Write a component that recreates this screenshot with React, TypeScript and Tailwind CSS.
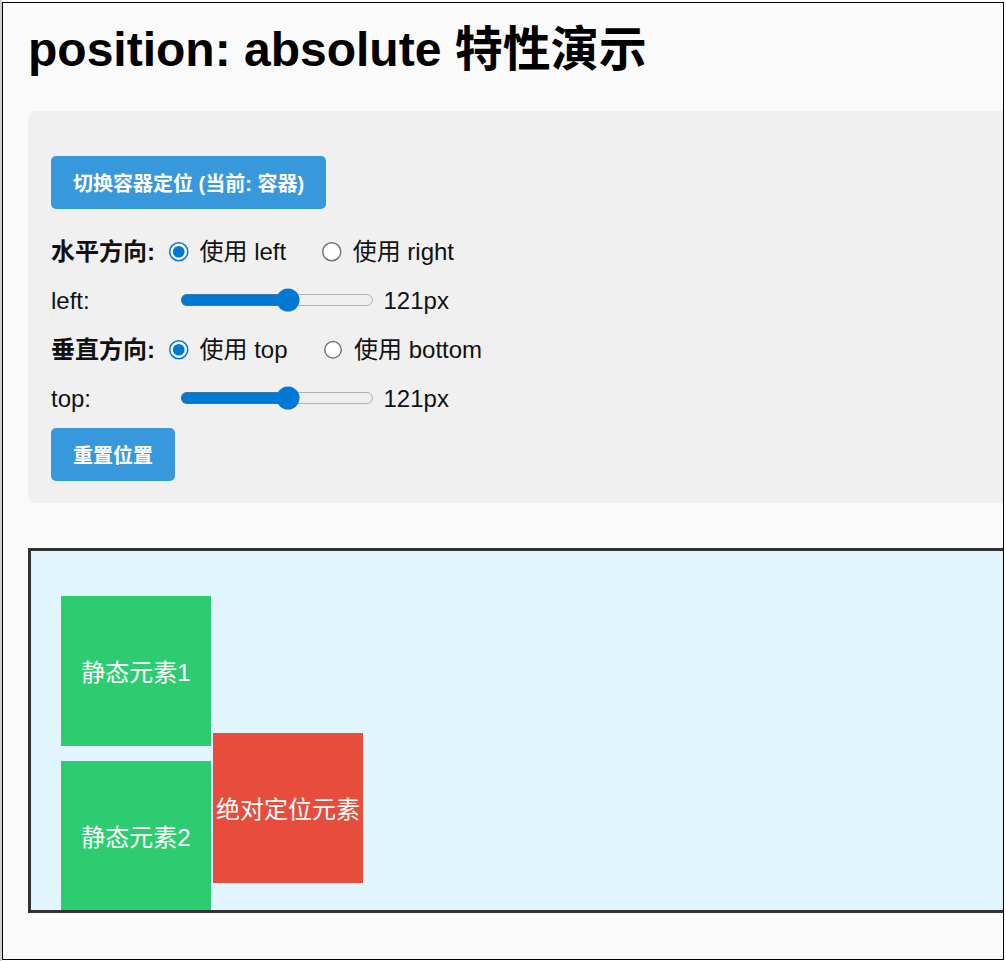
import { useState } from "react";

const FONT = "font-['Liberation_Sans','Noto_Sans_CJK_SC',sans-serif]";

function RadioRow({
  label,
  name,
  options,
  value,
  onChange,
}: {
  label: string;
  name: string;
  options: { value: string; text: string }[];
  value: string;
  onChange: (v: string) => void;
}) {
  return (
    <div className="flex h-[34px] items-center pt-[2px]">
      <span className="font-bold">{label}</span>
      {options.map((opt, i) => (
        <label key={opt.value} className={`flex items-center ${i === 0 ? "ml-[14px]" : "ml-[36px]"}`}>
          <input
            type="radio"
            name={name}
            checked={value === opt.value}
            onChange={() => onChange(opt.value)}
            className="m-0 accent-[#0078d4] [zoom:1.5]"
          />
          <span className="ml-[11px]">{opt.text}</span>
        </label>
      ))}
    </div>
  );
}

function SliderRow({
  label,
  value,
  onChange,
}: {
  label: string;
  value: number;
  onChange: (v: number) => void;
}) {
  return (
    <div className="flex h-[34px] items-center">
      <span className="inline-block w-[129px] pt-[2px]">{label}</span>
      <input
        type="range"
        min={0}
        max={214}
        value={value}
        onChange={(e) => onChange(Number(e.target.value))}
        className="m-0 w-[129px] accent-[#0078d4] [zoom:1.5]"
      />
      <span className="ml-[10px] pt-[2px]">{value}px</span>
    </div>
  );
}

export default function App() {
  const [horizontal, setHorizontal] = useState("left");
  const [vertical, setVertical] = useState("top");
  const [x, setX] = useState(121);
  const [y, setY] = useState(121);

  return (
    <div className={`h-[961px] w-[1006px] border-l-2 border-l-[#cfcfcf] bg-white pt-[2px] pr-[2px] pb-[1px] ${FONT}`}>
      <div className="h-full overflow-hidden border border-black bg-[#fafafa]">
        <div className="w-[1100px] pt-[19px] pl-[25px] text-[24px] text-[#111]">
          <h1 className="mb-[33px] text-[48px] leading-[56px] font-bold text-black">
            position: absolute 特性演示
          </h1>

          <div className="flex flex-col items-start rounded-[8px] bg-[#f0f0f0] pt-[45px] pb-[22px] pl-[23px]">
            <button className="h-[53px] rounded-[5px] bg-[#3799dc] px-[22px] pt-[2px] text-[20px] font-bold text-white">
              切换容器定位 (当前: 容器)
            </button>

            <div className="mt-[25px]">
              <RadioRow
                label="水平方向:"
                name="h"
                value={horizontal}
                onChange={setHorizontal}
                options={[
                  { value: "left", text: "使用 left" },
                  { value: "right", text: "使用 right" },
                ]}
              />
            </div>
            <div className="mt-[15px]">
              <SliderRow label={`${horizontal}:`} value={x} onChange={setX} />
            </div>
            <div className="mt-[15px]">
              <RadioRow
                label="垂直方向:"
                name="v"
                value={vertical}
                onChange={setVertical}
                options={[
                  { value: "top", text: "使用 top" },
                  { value: "bottom", text: "使用 bottom" },
                ]}
              />
            </div>
            <div className="mt-[15px]">
              <SliderRow label={`${vertical}:`} value={y} onChange={setY} />
            </div>

            <button
              onClick={() => {
                setX(121);
                setY(121);
              }}
              className="mt-[13px] h-[53px] rounded-[5px] bg-[#3799dc] px-[22px] pt-[2px] text-[20px] font-bold text-white"
            >
              重置位置
            </button>
          </div>

          <div className="relative mt-[45px] flex h-[365px] flex-col gap-[15px] overflow-hidden border-[3px] border-[#333] bg-[#e1f5fe] pt-[45px] pl-[30px] text-white">
            <div className="flex h-[150px] w-[150px] shrink-0 items-center justify-center bg-[#2ecc71] pt-[4px]">静态元素1</div>
            <div className="flex h-[150px] w-[150px] shrink-0 items-center justify-center bg-[#2ecc71] pt-[4px]">静态元素2</div>
            <div
              className="absolute flex h-[150px] w-[150px] items-center justify-center bg-[#e74c3c] pt-[4px]"
              style={{ left: Math.round(x * 1.5), top: Math.round(y * 1.5) }}
            >
              绝对定位元素
            </div>
          </div>
        </div>
      </div>
    </div>
  );
}
